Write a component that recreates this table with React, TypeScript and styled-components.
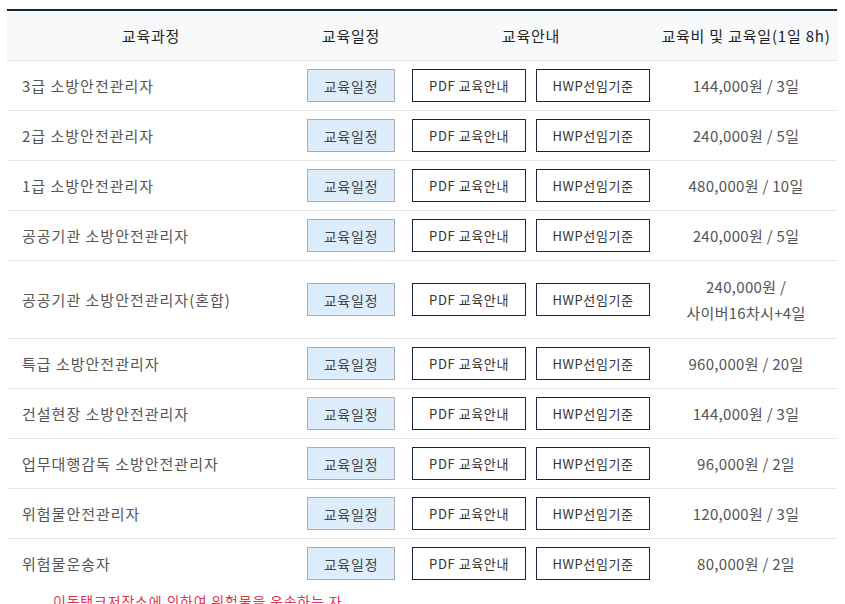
import styled, { createGlobalStyle } from 'styled-components'

const GlobalStyle = createGlobalStyle`
  html, body {
    margin: 0;
    padding: 0;
    background: #fff;
  }
  body {
    font-family: "Noto Sans CJK KR", "Noto Sans", sans-serif;
  }
`

const Page = styled.div`
  padding: 9px 8px 0 7px;
  height: 604px;
  overflow: hidden;
  box-sizing: border-box;
`

const Table = styled.table`
  width: 830px;
  border-collapse: collapse;
  table-layout: fixed;
  border-top: 2px solid #12263f;
  font-size: 15px;
  color: #555;
`

const HeadRow = styled.tr`
  background: #f7f9fb;
  border-bottom: 1px solid #e4e6e8;
`

const Th = styled.th`
  font-weight: 400;
  color: #222;
  line-height: 26px;
  padding: 11.5px 0;
  text-align: center;
  white-space: nowrap;
  letter-spacing: 0.8px;
`

const Row = styled.tr<{ $last?: boolean }>`
  border-bottom: ${({ $last }) => ($last ? 'none' : '1px solid #e6e6e6')};
`

const Td = styled.td`
  height: 33px;
  padding: 8px 0;
  text-align: center;
  vertical-align: middle;
`

const CourseCell = styled(Td)`
  padding-left: 15px;
  text-align: left;
  line-height: 26px;
  letter-spacing: 1px;
`

const Price = styled.div<{ $multi?: boolean }>`
  line-height: 26px;
  padding: ${({ $multi }) => ($multi ? '4.5px 0' : '0')};
  letter-spacing: 0.3px;
`

const ScheduleButton = styled.button`
  display: flex;
  align-items: center;
  justify-content: center;
  width: 88px;
  height: 33px;
  margin: 0 auto;
  box-sizing: border-box;
  background: #deedfc;
  border: 1px solid #a4adb8;
  color: #444;
  font-family: inherit;
  font-size: 14px;
  letter-spacing: 0.8px;
  padding: 0;
  cursor: pointer;
`

const GuideGroup = styled.div`
  display: flex;
  justify-content: center;
  gap: 10px;
`

const GuideButton = styled.button`
  display: flex;
  align-items: center;
  justify-content: center;
  width: 114px;
  height: 33px;
  box-sizing: border-box;
  background: #fff;
  border: 1px solid #15263d;
  color: #333;
  font-family: inherit;
  font-size: 13px;
  letter-spacing: 0.6px;
  padding: 0;
  cursor: pointer;
`

const NoteCell = styled.td`
  padding: 0 0 0 46px;
  line-height: 26px;
  font-size: 14px;
  letter-spacing: 0.8px;
  color: #e0354d;
  text-align: left;
`

interface Course {
  name: string
  price: string[]
}

const courses: Course[] = [
  { name: '3급 소방안전관리자', price: ['144,000원 / 3일'] },
  { name: '2급 소방안전관리자', price: ['240,000원 / 5일'] },
  { name: '1급 소방안전관리자', price: ['480,000원 / 10일'] },
  { name: '공공기관 소방안전관리자', price: ['240,000원 / 5일'] },
  { name: '공공기관 소방안전관리자(혼합)', price: ['240,000원 /', '사이버16차시+4일'] },
  { name: '특급 소방안전관리자', price: ['960,000원 / 20일'] },
  { name: '건설현장 소방안전관리자', price: ['144,000원 / 3일'] },
  { name: '업무대행감독 소방안전관리자', price: ['96,000원 / 2일'] },
  { name: '위험물안전관리자', price: ['120,000원 / 3일'] },
  { name: '위험물운송자', price: ['80,000원 / 2일'] },
]

export default function App() {
  return (
    <>
      <GlobalStyle />
      <Page>
        <Table>
          <colgroup>
            <col style={{ width: 288 }} />
            <col style={{ width: 112 }} />
            <col style={{ width: 248 }} />
            <col style={{ width: 182 }} />
          </colgroup>
          <thead>
            <HeadRow>
              <Th>교육과정</Th>
              <Th>교육일정</Th>
              <Th>교육안내</Th>
              <Th>교육비 및 교육일(1일 8h)</Th>
            </HeadRow>
          </thead>
          <tbody>
            {courses.map((c, i) => (
              <Row key={c.name} $last={i === courses.length - 1}>
                <CourseCell>{c.name}</CourseCell>
                <Td>
                  <ScheduleButton>교육일정</ScheduleButton>
                </Td>
                <Td>
                  <GuideGroup>
                    <GuideButton>PDF 교육안내</GuideButton>
                    <GuideButton>HWP선임기준</GuideButton>
                  </GuideGroup>
                </Td>
                <Td>
                  <Price $multi={c.price.length > 1}>
                    {c.price.map((line, j) => (
                      <div key={j}>{line}</div>
                    ))}
                  </Price>
                </Td>
              </Row>
            ))}
            <tr>
              <NoteCell colSpan={4}>이동탱크저장소에 의하여 위험물을 운송하는 자</NoteCell>
            </tr>
          </tbody>
        </Table>
      </Page>
    </>
  )
}
